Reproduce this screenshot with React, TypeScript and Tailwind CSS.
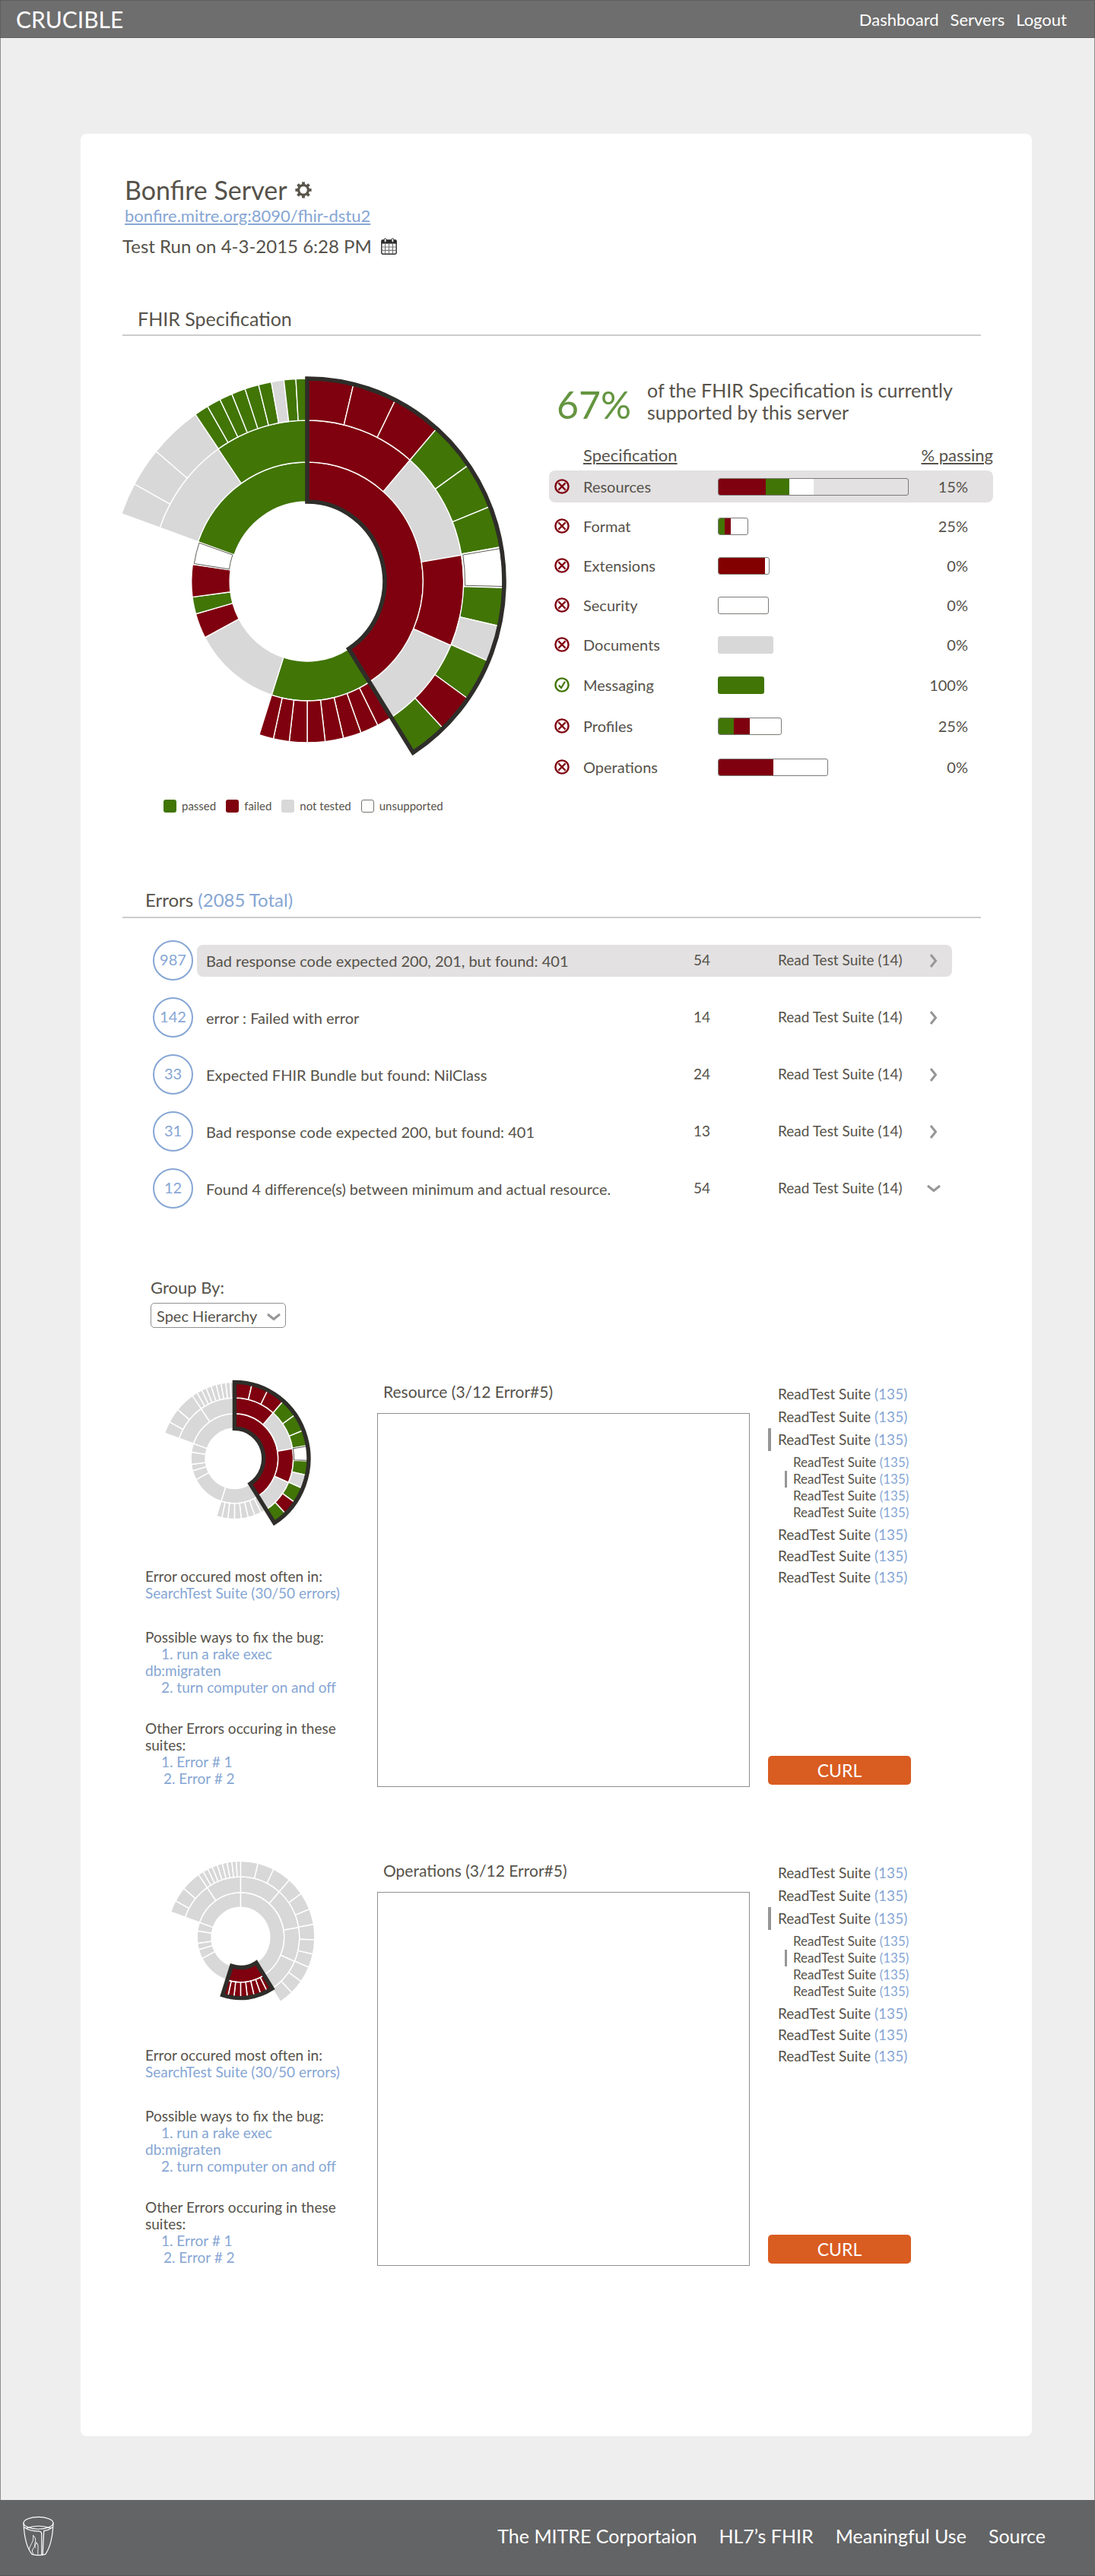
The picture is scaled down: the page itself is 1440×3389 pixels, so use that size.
import { useId } from "react";

const PASSED = "#417505";
const FAILED = "#7f000f";
const UNTESTED = "#d8d8d8";
const UNSUPPORTED = "#ffffff";
const INK = "#2f2d29";

type Kind = "p" | "f" | "n" | "u";
type Segment = [ring: number, from: number, to: number, kind: Kind];

const kindFill: Record<Kind, string> = { p: PASSED, f: FAILED, n: UNTESTED, u: UNSUPPORTED };

/* Ring boundaries; the chart is slightly narrower than it is tall. */
const RINGS = [105, 157, 212, 267];
const SQUASH = 0.97;

/* Turns a list of angles and a string of kinds into neighbouring segments. */
function ring(index: number, angles: number[], kinds: string): Segment[] {
  return kinds.split("").map((k, i) => [index, angles[i], angles[i + 1], k as Kind]);
}

const segments: Segment[] = [
  ...ring(0, [0, 147.5, 197.9, 242, 254.2, 262.5, 278.3, 289.5, 360], "fpnfpfup"),
  ...ring(1, [0, 41.1, 80.6, 113.4, 147.5], "fnfn"),
  ...ring(1, [147.5, 153.2, 159.9, 166.6, 173.4, 180, 186.6, 192.5, 197.9], "ffffffff"),
  ...ring(1, [289.5, 325.3, 360], "np"),
  ...ring(2, [0, 13.6, 26.6, 41.1, 55, 68.3, 80.2, 91.8, 102.7, 113.1, 125.3, 136.4, 147.5], "fffpppupnpfp"),
  ...ring(
    2,
    [289.5, 298.7, 309.9, 325.4, 329.6, 333.7, 337.5, 341.6, 345.7, 349.5, 353.2, 356.7, 360],
    "nnnppppppnpp",
  ),
];

function point(r: number, deg: number) {
  const a = (deg * Math.PI) / 180;
  return `${(r * Math.sin(a) * SQUASH).toFixed(2)} ${(-r * Math.cos(a)).toFixed(2)}`;
}

function sector(r0: number, r1: number, a0: number, a1: number) {
  const large = a1 - a0 > 180 ? 1 : 0;
  return [
    `M${point(r0, a0)}`,
    `L${point(r1, a0)}`,
    `A${r1 * SQUASH} ${r1} 0 ${large} 1 ${point(r1, a1)}`,
    `L${point(r0, a1)}`,
    `A${r0 * SQUASH} ${r0} 0 ${large} 0 ${point(r0, a0)}`,
    "Z",
  ].join(" ");
}

type Selection = { from: number; to: number; depth: number; failedOnly?: boolean };

const RESOURCES: Selection = { from: 0, to: 147.5, depth: 3 };
const OPERATIONS: Selection = { from: 147.5, to: 197.9, depth: 2, failedOnly: true };

function Sunburst({
  selection,
  muted = false,
  outline,
  gap,
  className,
  label,
}: {
  selection: Selection;
  muted?: boolean;
  outline: number;
  gap: number;
  className: string;
  label: string;
}) {
  return (
    <svg viewBox="-243 -276 513 516" className={className} role="img" aria-label={label}>
      {segments.map(([r, a0, a1, kind], i) => {
        const inside = a0 >= selection.from && a1 <= selection.to && r < selection.depth;
        let fill = kindFill[kind];
        if (muted && !inside) fill = UNTESTED;
        if (inside && selection.failedOnly) fill = FAILED;
        return (
          <path
            key={i}
            d={sector(RINGS[r], RINGS[r + 1], a0, a1)}
            fill={fill}
            stroke="#ffffff"
            strokeWidth={gap}
          />
        );
      })}
      {segments
        .filter(([, a0, a1, k]) => k === "u" && (!muted || (a0 >= selection.from && a1 <= selection.to)))
        .map(([r, a0, a1], i) => (
          <path
            key={i}
            d={sector(RINGS[r] + 2, RINGS[r + 1] - 2, a0 + 0.4, a1 - 0.4)}
            fill={UNSUPPORTED}
            stroke="#55524b"
            strokeWidth={gap / 1.5}
          />
        ))}
      <path
        d={sector(RINGS[0], RINGS[selection.depth], selection.from, selection.to)}
        fill="none"
        stroke={INK}
        strokeWidth={outline}
      />
    </svg>
  );
}

function GearIcon() {
  return (
    <svg viewBox="-11 -11 22 22" className="size-[22px]" aria-hidden="true">
      {[0, 45, 90, 135, 180, 225, 270, 315].map((a) => (
        <rect key={a} x="-1.9" y="-10.6" width="3.8" height="5" fill="#5a564b" transform={`rotate(${a})`} />
      ))}
      <circle r="6.4" fill="none" stroke="#5a564b" strokeWidth="3.2" />
    </svg>
  );
}

function CalendarIcon() {
  return (
    <svg viewBox="0 0 21 22" className="h-[22px] w-[21px]" aria-hidden="true">
      <rect x="0.8" y="3" width="19.4" height="18.2" rx="1.6" fill="#ffffff" stroke="#2d2c2c" strokeWidth="1.4" />
      <rect x="0.8" y="2.6" width="19.4" height="5" fill="#2d2c2c" />
      <path d="M5.6 8V21M10.5 8V21M15.4 8V21M1 12H20M1 16.4H20" stroke="#777777" strokeWidth="1.2" />
      <rect x="4.2" y="0.7" width="2.8" height="5" rx="1.4" fill="#ffffff" stroke="#2d2c2c" />
      <rect x="14" y="0.7" width="2.8" height="5" rx="1.4" fill="#ffffff" stroke="#2d2c2c" />
    </svg>
  );
}

function StatusIcon({ ok }: { ok: boolean }) {
  return (
    <svg viewBox="0 0 20 20" className="size-5" role="img" aria-label={ok ? "passed" : "failed"}>
      <circle cx="10" cy="10" r="8.6" fill="none" stroke={ok ? PASSED : FAILED} strokeWidth="2.4" />
      <path
        d={ok ? "M6 10.6L9 14L14 5.8" : "M5.4 5.4L14.6 14.6M14.6 5.4L5.4 14.6"}
        fill="none"
        stroke={ok ? PASSED : FAILED}
        strokeWidth="2.2"
      />
    </svg>
  );
}

function Chevron({ down = false }: { down?: boolean }) {
  return (
    <svg viewBox="0 0 18 18" className="size-[18px]" aria-hidden="true">
      <path
        d={down ? "M1 5L9 11.5L17 5" : "M5 1L11.5 9L5 17"}
        fill="none"
        stroke="#969696"
        strokeWidth="3"
      />
    </svg>
  );
}

function CrucibleLogo() {
  return (
    <svg
      viewBox="30 34 124 158"
      className="h-[53px] w-[41px]"
      fill="none"
      stroke="#ffffff"
      strokeWidth="3.6"
      role="img"
      aria-label="Crucible"
    >
      <ellipse cx="92" cy="61" rx="59" ry="24" />
      <path d="M33 61C35 110 46 160 66 185Q92 193 120 185C138 160 149 110 151 61" />
      <path d="M44 82Q92 64 142 82" />
      <path d="M36 78Q58 94 96 94Q105 96 105 104V187" />
      <path d="M148 78Q132 90 114 92L109 187" />
      <path
        d="M56 168C54 150 76 140 71 110C92 128 70 144 80 160M72 184C58 166 80 160 84 138C96 150 88 170 90 186"
        strokeWidth="2.8"
      />
    </svg>
  );
}

const legend: [string, string][] = [
  ["passed", "bg-[#417505]"],
  ["failed", "bg-[#7f000f]"],
  ["not tested", "bg-[#d8d8d8]"],
  ["unsupported", "border border-[#77746e] bg-white"],
];

type Bar = { name: string; pct: number; width: number; outlined: boolean; parts: [string, number][] };

const specs: Bar[] = [
  {
    name: "Resources",
    pct: 15,
    width: 251,
    outlined: true,
    parts: [["bg-[#7f000f]", 62], ["bg-[#417505]", 31], ["bg-white", 32]],
  },
  { name: "Format", pct: 25, width: 40, outlined: true, parts: [["bg-[#417505]", 8], ["bg-[#7f000f]", 8]] },
  { name: "Extensions", pct: 0, width: 68, outlined: true, parts: [["bg-[#830000]", 61]] },
  { name: "Security", pct: 0, width: 67, outlined: true, parts: [] },
  { name: "Documents", pct: 0, width: 73, outlined: false, parts: [["bg-[#d8d8d8]", 73]] },
  { name: "Messaging", pct: 100, width: 61, outlined: false, parts: [["bg-[#417505]", 61]] },
  { name: "Profiles", pct: 25, width: 84, outlined: true, parts: [["bg-[#417505]", 20], ["bg-[#7f000f]", 21]] },
  { name: "Operations", pct: 0, width: 145, outlined: true, parts: [["bg-[#7f000f]", 72]] },
];

function SpecTable() {
  return (
    <table className="mt-[22px] w-full table-fixed border-separate border-spacing-x-0 border-spacing-y-[10px] text-[20px]">
      <colgroup>
        <col className="w-[45px]" />
        <col className="w-[177px]" />
        <col />
        <col className="w-[96px]" />
      </colgroup>
      <thead>
        <tr className="text-[22px] leading-5 underline underline-offset-2">
          <td className="p-0" />
          <th scope="col" className="p-0 text-left font-normal">Specification</th>
          <td className="p-0" />
          <th scope="col" className="p-0 text-right font-normal whitespace-nowrap">% passing</th>
        </tr>
      </thead>
      <tbody>
        {specs.map((s, i) => {
          const bg = i === 0 ? "bg-[#e3e1e2]" : "";
          const height = i < 5 ? "h-[42px]" : "h-[44px]";
          return (
            <tr key={s.name} className={height}>
              <td className={`${bg} rounded-l-lg p-0 pl-[7px]`}>
                <StatusIcon ok={s.pct === 100} />
              </td>
              <th scope="row" className={`${bg} p-0 text-left font-normal`}>{s.name}</th>
              <td className={`${bg} p-0`}>
                <div
                  className={`flex h-[23px] overflow-hidden rounded-[3px] ${s.outlined ? "border border-[#7c7a76]" : ""}`}
                  style={{ width: s.width }}
                >
                  {s.parts.map(([color, w], j) => (
                    <span key={j} className={`${color} h-full shrink-0`} style={{ width: w }} />
                  ))}
                </div>
              </td>
              <td className={`${bg} rounded-r-lg p-0 pr-[33px] text-right`}>{s.pct}%</td>
            </tr>
          );
        })}
      </tbody>
    </table>
  );
}

const errors: [number, string, number][] = [
  [987, "Bad response code expected 200, 201, but found: 401", 54],
  [142, "error : Failed with error", 14],
  [33, "Expected FHIR Bundle but found: NilClass", 24],
  [31, "Bad response code expected 200, but found: 401", 13],
  [12, "Found 4 difference(s) between minimum and actual resource.", 54],
];

function ErrorTable() {
  return (
    <div className="mt-[7px] mr-[38px] ml-10">
      <table className="w-full table-fixed border-separate border-spacing-x-0 border-spacing-y-[22px] text-[19px]">
        <colgroup>
          <col className="w-[58px]" />
          <col />
          <col className="w-[111px]" />
          <col className="w-[181px]" />
          <col className="w-[48px]" />
        </colgroup>
        <tbody>
          {errors.map(([total, message, count], i) => {
            const cell = `flex h-[42px] items-center whitespace-nowrap ${i === 0 ? "bg-[#e3e1e2]" : ""}`;
            const open = i === errors.length - 1;
            return (
              <tr key={total}>
                <td className="p-0">
                  <div className="flex size-[53px] items-center justify-center rounded-full border-2 border-[#86a6d4] pb-1 text-[20px] text-[#86a6d4]">
                    {total}
                  </div>
                </td>
                <td className="p-0"><div className={`${cell} rounded-l-lg pl-3 text-[20px]`}>{message}</div></td>
                <td className="p-0"><div className={cell}>{count}</div></td>
                <td className="p-0"><div className={cell}>Read Test Suite (14)</div></td>
                <td className="p-0">
                  <div className={`${cell} justify-center rounded-r-lg`}>
                    <button type="button" aria-expanded={open} aria-label={`Details of error ${total}`}>
                      <Chevron down={open} />
                    </button>
                  </div>
                </td>
              </tr>
            );
          })}
        </tbody>
      </table>
    </div>
  );
}

function SuiteLink() {
  return (
    <a href="#suite" className="whitespace-nowrap">
      ReadTest Suite <span className="text-[#86a6d4]">(135)</span>
    </a>
  );
}

function SuiteList() {
  return (
    <ul className="text-[19px]">
      {[0, 1, 2].map((i) => (
        <li
          key={i}
          className={`flex h-[30px] items-center border-l-4 pl-[9px] ${i === 2 ? "border-[#969696]" : "border-transparent"}`}
        >
          <SuiteLink />
        </li>
      ))}
      <li className="py-1">
        <ul className="text-[17px]">
          {[0, 1, 2, 3].map((i) => (
            <li
              key={i}
              className={`ml-[22px] flex h-[22px] items-center border-l-3 pl-2 ${i === 1 ? "border-[#969696]" : "border-transparent"}`}
            >
              <SuiteLink />
            </li>
          ))}
        </ul>
      </li>
      {[0, 1, 2].map((i) => (
        <li key={i} className="flex h-7 items-center pl-[13px]">
          <SuiteLink />
        </li>
      ))}
    </ul>
  );
}

function ErrorDetail({
  title,
  selection,
  chartMargin,
}: {
  title: string;
  selection: Selection;
  chartMargin: string;
}) {
  const id = useId();
  return (
    <section aria-labelledby={id} className="mr-[92px] ml-[30px] flex h-[536px]">
      <div className="w-[264px] shrink-0 text-[19px] leading-[22px]">
        <Sunburst
          muted
          selection={selection}
          outline={14.4}
          gap={4}
          className={`block w-[193px] ${chartMargin}`}
          label={`Test results, ${title}`}
        />
        <p className="mt-[54px]">Error occured most often in:</p>
        <p>
          <a href="#search" className="text-[#86a6d4]">SearchTest Suite (30/50 errors)</a>
        </p>
        <p className="mt-9">Possible ways to fix the bug:</p>
        <ol className="text-[#86a6d4]">
          <li className="indent-[21px]">1. run a rake exec db:migraten</li>
          <li className="indent-[21px]">2. turn computer on and off</li>
        </ol>
        <p className="mt-8">Other Errors occuring in these suites:</p>
        <ol className="text-[#86a6d4]">
          <li className="indent-[21px]"><a href="#error-1">1. Error # 1</a></li>
          <li className="indent-[24px]"><a href="#error-2">2. Error # 2</a></li>
        </ol>
      </div>
      <div className="ml-[41px] flex flex-1 flex-col">
        <h3 id={id} className="mt-0.5 pl-2 text-[21px] leading-[28px]">{title}</h3>
        <div className="mt-[14px] flex-1 border border-[#8f8f8f]" />
      </div>
      <div className="ml-6 flex w-[188px] shrink-0 flex-col justify-between pt-1 pb-[3px]">
        <SuiteList />
        <button type="button" className="h-[38px] rounded-[5px] bg-[#d95c21] text-[23px] text-white">
          CURL
        </button>
      </div>
    </section>
  );
}

export default function App() {
  return (
    <div className="min-w-[1280px] bg-[#eeeeee] font-[Lato,sans-serif] text-[#56524a]">
      <header className="flex h-[50px] items-center justify-between border border-[#5e5e5e] bg-[#6e6e6e] pr-9 pl-5 text-white">
        <a href="#home" className="text-[30px]">CRUCIBLE</a>
        <nav className="flex gap-[15px] text-[22px]">
          <a href="#dashboard">Dashboard</a>
          <a href="#servers">Servers</a>
          <a href="#logout">Logout</a>
        </nav>
      </header>

      <div className="border-x border-[#8e8e8e] pt-[126px] pr-[82px] pb-[84px] pl-[105px]">
        <main className="rounded-lg bg-white pt-[54px] pr-[67px] pb-[224px] pl-[55px]">
          <div className="flex items-center gap-[10px] pl-[3px]">
            <h1 className="text-[34px] leading-10">Bonfire Server</h1>
            <button type="button" aria-label="Server settings">
              <GearIcon />
            </button>
          </div>
          <p className="pl-[3px] text-[22px] leading-7">
            <a href="#server" className="text-[#86a6d4] underline decoration-2 underline-offset-2">
              bonfire.mitre.org:8090/fhir-dstu2
            </a>
          </p>
          <div className="mt-[10px] flex items-center gap-3 text-[24px] leading-8">
            <p>Test Run on 4-3-2015 6:28 PM</p>
            <button type="button" aria-label="Choose test run">
              <CalendarIcon />
            </button>
          </div>

          <h2 className="mt-[63px] border-b-2 border-[#cccccc] pb-[5px] pl-5 text-[25px] leading-8">
            FHIR Specification
          </h2>
          <div className="mt-[47px] flex">
            <div className="w-[513px] shrink-0">
              <Sunburst
                selection={RESOURCES}
                outline={5.6}
                gap={1.4}
                className="block w-full"
                label="Test results by specification"
              />
              <ul className="mt-[47px] flex gap-[13px] pl-[54px] text-[15px] leading-[17px]">
                {legend.map(([name, swatch]) => (
                  <li key={name} className="flex items-center gap-[7px]">
                    <span className={`size-[17px] rounded-[3px] ${swatch}`} />
                    {name}
                  </li>
                ))}
              </ul>
            </div>
            <div className="-mr-4 ml-12 min-w-0 flex-1">
              <div className="mt-[10px] flex items-end pl-[10px]">
                <strong className="w-[119px] shrink-0 text-[50px] leading-[50px] font-normal text-[#659540]">67%</strong>
                <p className="text-[25px] leading-[29px]">of the FHIR Specification is currently supported by this server</p>
              </div>
              <SpecTable />
            </div>
          </div>

          <h2 className="mt-[99px] border-b-2 border-[#cccccc] pb-[6px] pl-[30px] text-[24px] leading-8">
            Errors <span className="text-[#86a6d4]">(2085 Total)</span>
          </h2>
          <ErrorTable />

          <div className="mt-[68px] mb-[68px] ml-[37px]">
            <label htmlFor="group-by" className="block text-[22px] leading-7">Group By:</label>
            <div className="relative mt-[6px] w-[178px]">
              <select
                id="group-by"
                className="h-[33px] w-full appearance-none rounded-[5px] border border-[#8f8f8f] bg-white pl-[7px] text-[20px]"
              >
                <option>Spec Hierarchy</option>
              </select>
              <span className="pointer-events-none absolute top-[10px] right-[7px]">
                <Chevron down />
              </span>
            </div>
          </div>

          <div className="flex flex-col gap-[94px]">
            <ErrorDetail title="Resource (3/12 Error#5)" selection={RESOURCES} chartMargin="ml-[26px]" />
            <ErrorDetail title="Operations (3/12 Error#5)" selection={OPERATIONS} chartMargin="ml-[34px]" />
          </div>
        </main>
      </div>

      <footer className="flex h-[100px] items-center justify-between border-b border-[#555657] bg-[#636466] pr-[65px] pb-1 pl-[30px] text-white">
        <CrucibleLogo />
        <nav className="flex gap-[29px] text-[25px]">
          <a href="#mitre">The MITRE Corportaion</a>
          <a href="#hl7">HL7’s FHIR</a>
          <a href="#meaningful-use">Meaningful Use</a>
          <a href="#source">Source</a>
        </nav>
      </footer>
    </div>
  );
}
